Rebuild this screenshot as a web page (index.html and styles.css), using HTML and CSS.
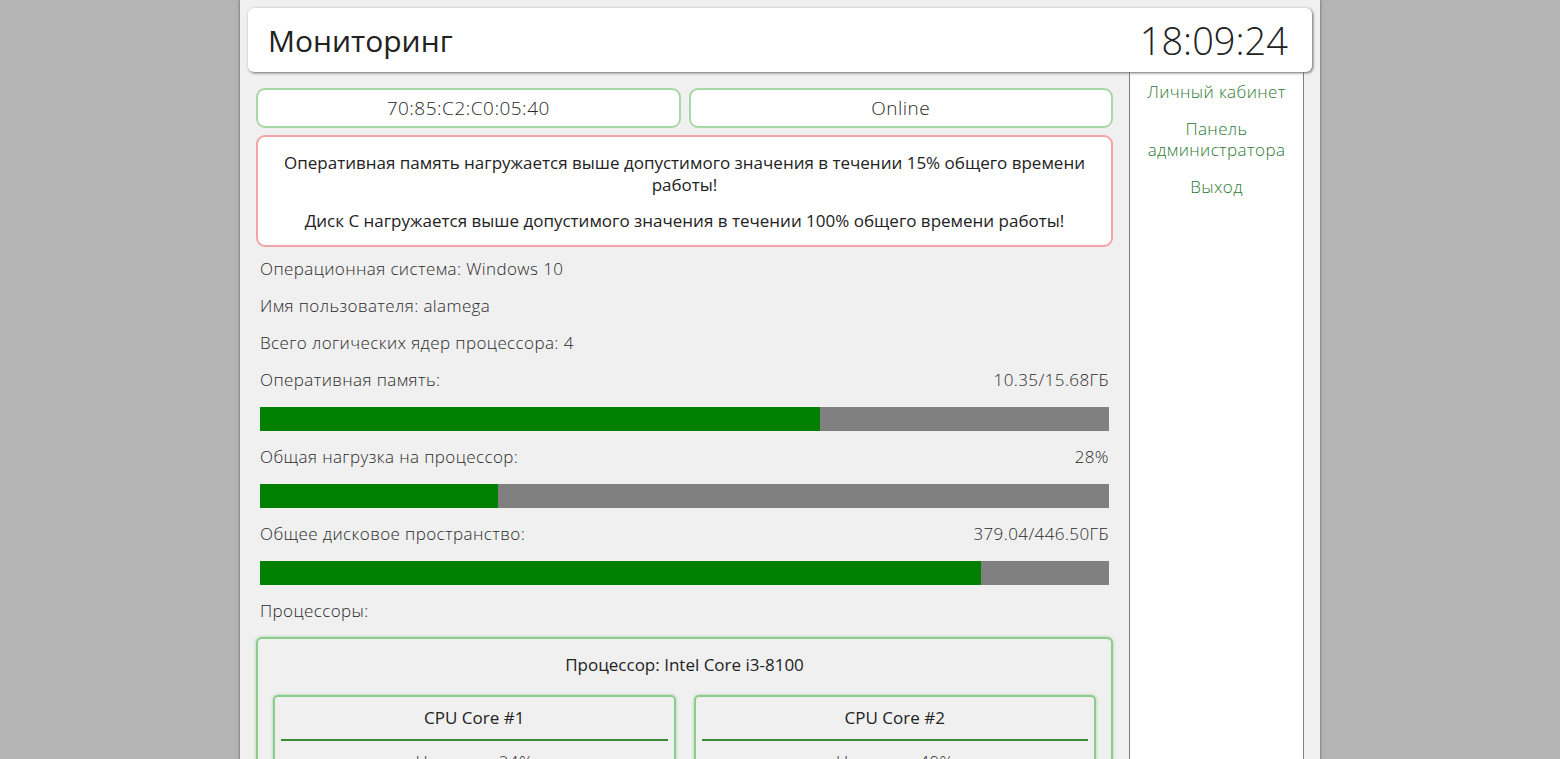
FILE: index.html
```html
<!DOCTYPE html>
<html lang="ru">
<head>
<meta charset="utf-8">
<title>Мониторинг</title>
<link rel="stylesheet" href="styles.css">
</head>
<body>
<div class="page">
  <header class="header">
    <h1 class="title">Мониторинг</h1>
    <div class="clock">18:09:24</div>
  </header>
  <div class="layout">
    <main class="main">
      <div class="status-row">
        <div class="status-box">70:85:C2:C0:05:40</div>
        <div class="status-box">Online</div>
      </div>
      <div class="alert">
        <p>Оперативная память нагружается выше допустимого значения в течении 15% общего времени работы!</p>
        <p>Диск C нагружается выше допустимого значения в течении 100% общего времени работы!</p>
      </div>
      <div class="info">
        <div class="info-line">Операционная система: Windows 10</div>
        <div class="info-line">Имя пользователя: alamega</div>
        <div class="info-line">Всего логических ядер процессора: 4</div>
        <div class="info-line split"><span>Оперативная память:</span><span>10.35/15.68ГБ</span></div>
        <div class="bar"><div class="bar-fill" style="width: 66%"></div></div>
        <div class="info-line split"><span>Общая нагрузка на процессор:</span><span>28%</span></div>
        <div class="bar"><div class="bar-fill" style="width: 28%"></div></div>
        <div class="info-line split"><span>Общее дисковое пространство:</span><span>379.04/446.50ГБ</span></div>
        <div class="bar"><div class="bar-fill" style="width: 84.9%"></div></div>
        <div class="info-line">Процессоры:</div>
      </div>
      <section class="cpu">
        <h2 class="cpu-title">Процессор: Intel Core i3-8100</h2>
        <div class="cores">
          <div class="core">
            <h3 class="core-title">CPU Core #1</h3>
            <div class="core-body">Нагрузка: 24%</div>
          </div>
          <div class="core">
            <h3 class="core-title">CPU Core #2</h3>
            <div class="core-body">Нагрузка: 40%</div>
          </div>
        </div>
      </section>
    </main>
    <nav class="sidebar">
      <a class="nav-link" href="#">Личный кабинет</a>
      <a class="nav-link" href="#">Панель администратора</a>
      <a class="nav-link" href="#">Выход</a>
    </nav>
  </div>
</div>
</body>
</html>
```

FILE: styles.css
```css
html, body {
  margin: 0;
  padding: 0;
  height: 100%;
}
body {
  background: #b5b5b5;
  font-family: "Open Sans", "Noto Sans", sans-serif;
  color: #333;
  overflow: hidden;
}
.page {
  width: 1064px;
  min-height: 100%;
  margin: 0 auto;
  padding: 8px 8px 0 8px;
  background: #f0f0f0;
  box-shadow: 0 0 3px #555;
  box-sizing: content-box;
}
.header {
  position: relative;
  z-index: 2;
  height: 64px;
  box-sizing: border-box;
  background: #fff;
  border-radius: 6px;
  box-shadow: 1px 1px 3px #666;
  display: flex;
  align-items: center;
  justify-content: space-between;
  padding: 0 24px 0 20px;
}
.title {
  margin: 0;
  font-size: 30px;
  font-weight: 400;
  color: #222;
}
.clock {
  font-size: 38px;
  font-weight: 300;
  color: #222;
}
.layout {
  display: grid;
  grid-template-columns: 881px 175px;
  min-height: calc(100vh - 72px);
}
.main {
  padding: 16px 16px 0 8px;
}
.status-row {
  display: grid;
  grid-template-columns: 1fr 1fr;
  gap: 8px;
}
.status-box {
  height: 40px;
  box-sizing: border-box;
  background: #fff;
  border: 2px solid #a8d8a8;
  border-radius: 9px;
  display: flex;
  align-items: center;
  justify-content: center;
  font-size: 19px;
  letter-spacing: 0.5px;
  font-weight: 300;
  color: #2a2a2a;
}
.alert {
  margin-top: 7px;
  height: 112px;
  box-sizing: border-box;
  background: #fff;
  border: 2px solid #f4a4a4;
  border-radius: 9px;
  padding: 15px 24px 0;
  text-align: center;
  font-size: 17px;
  line-height: 22px;
  color: #222;
}
.alert p {
  margin: 0 0 14px;
}
.info {
  margin-top: 12px;
  padding: 0 4px;
  display: flex;
  flex-direction: column;
  gap: 17px;
}
.info-line {
  height: 20px;
  line-height: 20px;
  font-size: 17px;
  letter-spacing: 0.4px;
  font-weight: 300;
  color: #2a2a2a;
}
.split {
  display: flex;
  justify-content: space-between;
}
.bar {
  height: 24px;
  margin-bottom: -1px;
  background: #808080;
}
.bar-fill {
  height: 100%;
  background: #008000;
}
.cpu {
  margin-top: 16px;
  background: #f0f0f0;
  border: 2px solid #8ccc8c;
  border-radius: 6px;
  box-shadow: 0 0 3px #9c9;
  padding: 15px 15px 0;
  height: 200px;
}
.cpu-title {
  margin: 0;
  text-align: center;
  font-size: 17px;
  font-weight: 400;
  line-height: 22px;
  color: #222;
}
.cores {
  margin-top: 19px;
  display: grid;
  grid-template-columns: 1fr 1fr;
  gap: 18px;
}
.core {
  border: 2px solid #8ccc8c;
  border-radius: 5px;
  box-shadow: 0 0 3px #9c9;
  padding: 0 6px;
  height: 120px;
}
.core-title {
  margin: 0;
  text-align: center;
  font-size: 17px;
  font-weight: 400;
  line-height: 22px;
  padding: 10px 0 10px;
  border-bottom: 2px solid #3a8a3a;
  color: #222;
}
.core-body {
  text-align: center;
  padding-top: 10px;
  line-height: 22px;
  font-size: 17px;
  letter-spacing: 0.4px;
  font-weight: 300;
  color: #2a2a2a;
}
.sidebar {
  background: #fff;
  border-left: 1px solid #808080;
  border-right: 1px solid #808080;
  display: flex;
  flex-direction: column;
  align-items: center;
  padding-top: 9px;
  gap: 16px;
}
.nav-link {
  display: block;
  width: 160px;
  text-align: center;
  font-size: 17px;
  letter-spacing: 0.4px;
  line-height: 21px;
  font-weight: 300;
  color: #2f7a34;
  text-decoration: none;
}
```
